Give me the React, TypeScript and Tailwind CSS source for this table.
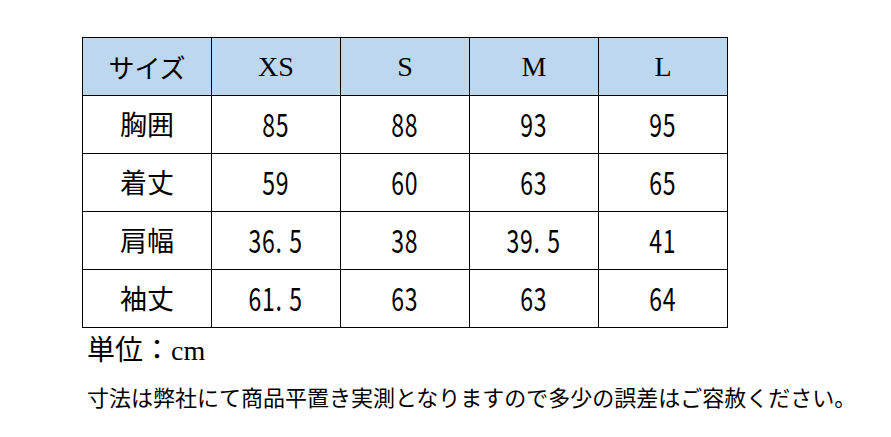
const jp = "font-['Noto_Sans_CJK_JP',sans-serif]";
const serif = "font-['Liberation_Serif','Noto_Sans_CJK_JP',serif]";

const sizes = ["XS", "S", "M", "L"];

const rows: { label: string; values: string[] }[] = [
  { label: "胸囲", values: ["85", "88", "93", "95"] },
  { label: "着丈", values: ["59", "60", "63", "65"] },
  { label: "肩幅", values: ["36.5", "38", "39.5", "41"] },
  { label: "袖丈", values: ["61.5", "63", "63", "64"] },
];

function Num({ value }: { value: string }) {
  return (
    <span className="inline-flex scale-x-[0.72] text-[32px] leading-none tracking-[1px]">
      {value.split("").map((c, i) => (
        <span key={i} className={c === "." ? "w-[19px] text-left" : ""}>
          {c}
        </span>
      ))}
    </span>
  );
}

export default function App() {
  return (
    <div className="w-[891px] h-[437px] bg-white text-black pl-[82px] pt-[37px]">
      <table className="border-collapse">
        <thead>
          <tr className="bg-[#bdd7ee]">
            <th className={`w-[129px] h-[58px] border border-black font-normal text-[26px] ${jp}`}>
              サイズ
            </th>
            {sizes.map((s) => (
              <th
                key={s}
                className={`w-[129px] h-[58px] border border-black font-normal text-[28px] ${serif}`}
              >
                {s}
              </th>
            ))}
          </tr>
        </thead>
        <tbody>
          {rows.map((r) => (
            <tr key={r.label}>
              <td className={`h-[58px] border border-black text-center text-[27px] ${jp}`}>
                {r.label}
              </td>
              {r.values.map((v, i) => (
                <td key={i} className={`h-[58px] border border-black text-center ${jp}`}>
                  <Num value={v} />
                </td>
              ))}
            </tr>
          ))}
        </tbody>
      </table>
      <div className="flex items-baseline pl-[5px] h-[40px] leading-[40px]">
        <span className={`text-[28px] ${jp}`}>単位：</span>
        <span className={`text-[28px] ${serif}`}>cm</span>
      </div>
      <div className={`mt-[13px] pl-[5px] text-[22px] leading-[30px] whitespace-nowrap ${jp}`}>
        寸法は弊社にて商品平置き実測となりますので多少の誤差はご容赦ください。
      </div>
    </div>
  );
}
